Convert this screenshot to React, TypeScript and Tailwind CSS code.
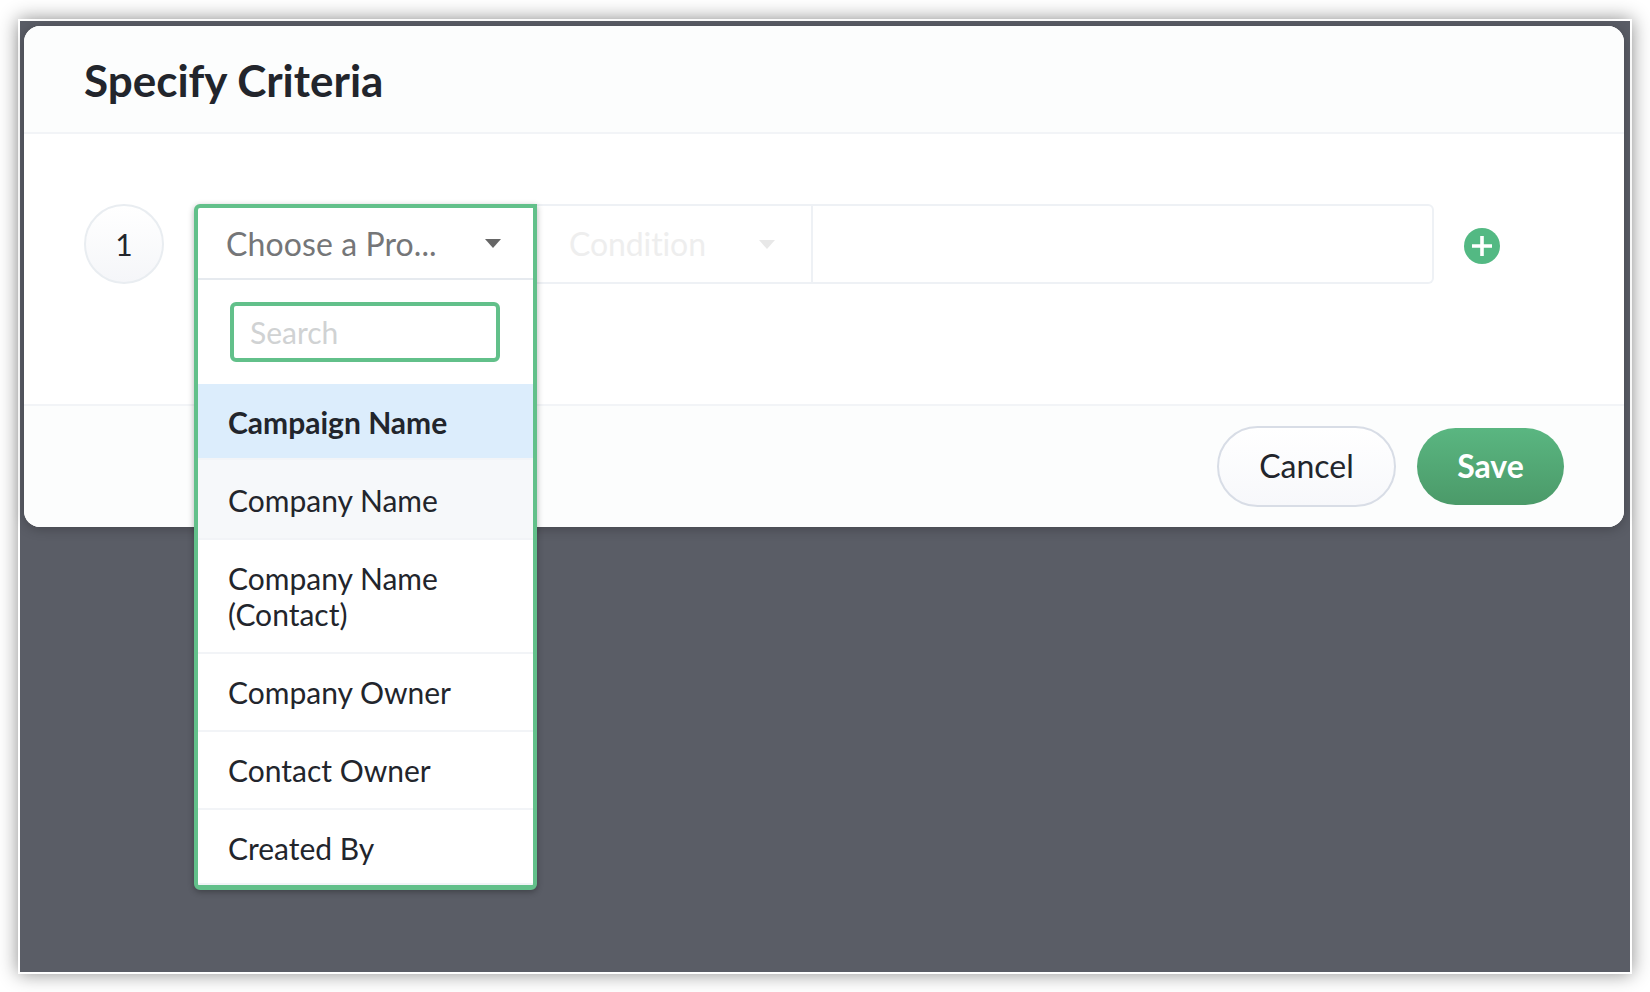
export default function App() {
  const Item = ({ children, cls = "" }: { children: React.ReactNode; cls?: string }) => (
    <div className={`flex items-center pl-[30px] pr-4 text-[30px] leading-[36px] border-b-2 border-[#f2f4f7] text-[#22252c] ${cls}`}>{children}</div>
  );
  return (
    <div className="w-[1650px] h-[992px] bg-white pt-[19px] pl-[18px] font-['Lato',sans-serif]">
      <div className="w-[1614px] h-[955px] border-2 border-white bg-[#5a5d66] shadow-[0_0_18px_rgba(0,0,0,0.45)] pt-[5px] pl-[4px]">
        <div className="w-[1600px] h-[501px] rounded-[16px] bg-white shadow-[0_2px_12px_rgba(0,0,0,0.25)] flex flex-col overflow-visible">
          <div className="h-[108px] shrink-0 rounded-t-[16px] bg-[#fcfdfd] border-b-2 border-[#f2f4f7] pl-[60px] pt-[26px]">
            <h1 className="text-[44px] leading-[56px] font-bold text-[#22252c]">Specify Criteria</h1>
          </div>
          <div className="h-[270px] shrink-0 pt-[70px] pl-[60px] flex items-start">
            <div className="w-[80px] h-[80px] rounded-full border-2 border-[#e9edf1] bg-gradient-to-b from-white to-[#f5f6f9] flex items-center justify-center text-[30px] text-[#22252c]">1</div>
            <div className="relative w-[343px] h-[80px] ml-[30px] shrink-0">
              <div className="absolute left-0 top-0 w-[343px] h-[686px] z-10 rounded-[6px] rounded-tr-none border-[4px] border-b-[5px] border-[#62c08a] bg-white shadow-[0_2px_6px_rgba(0,0,0,0.3)] flex flex-col overflow-hidden">
                <div className="h-[72px] shrink-0 border-b-2 border-[#e6eaef] flex items-center justify-between pl-[28px] pr-[32px] pt-[1px]">
                  <span className="text-[32px] tracking-[0.1px] text-[#757678]">Choose a Pro...</span>
                  <svg width="16" height="9" viewBox="0 0 16 9"><path d="M0 0h16L8 9z" fill="#666" /></svg>
                </div>
                <div className="h-[104px] shrink-0 pt-[22px] pl-[32px]">
                  <div className="w-[270px] h-[60px] rounded-[6px] border-[4px] border-[#62c08a] bg-white flex items-center pl-[16px] text-[30px] text-[#d0d2d3]">Search</div>
                </div>
                <Item cls="h-[76px] pt-[1px] bg-[#dcedfc] font-bold border-b-0">Campaign Name</Item>
                <Item cls="h-[80px] pt-[1px] bg-[#f6f8fa]">Company Name</Item>
                <Item cls="h-[114px]">Company Name<br />(Contact)</Item>
                <Item cls="h-[78px]">Company Owner</Item>
                <Item cls="h-[78px]">Contact Owner</Item>
                <Item cls="flex-1 pt-[2px] border-b-0">Created By</Item>
              </div>
            </div>
            <div className="w-[276px] h-[80px] shrink-0 border-y-2 border-r-2 border-[#eef1f5] flex items-center justify-between pl-[32px] pr-[36px]">
              <span className="text-[32px] tracking-[-0.1px] text-[#eeeeee]">Condition</span>
              <svg width="16" height="9" viewBox="0 0 16 9"><path d="M0 0h16L8 9z" fill="#e8e8e8" /></svg>
            </div>
            <div className="w-[621px] h-[80px] shrink-0 border-y-2 border-r-2 border-[#eef1f5] rounded-r-[6px]" />
            <div className="ml-[30px] mt-[24px] w-[36px] h-[36px] rounded-full bg-[#53b983] flex items-center justify-center">
              <svg width="20" height="20" viewBox="0 0 20 20"><path d="M10 0v20M0 10h20" stroke="#fff" strokeWidth="3.6" /></svg>
            </div>
          </div>
          <div className="flex-1 rounded-b-[16px] bg-[#fcfdfd] border-t-2 border-[#f2f4f7] flex items-start justify-end pr-[60px] pt-[20px] gap-[21px]">
            <button className="w-[179px] h-[81px] pb-[2px] rounded-full border-2 border-[#d8dde6] bg-gradient-to-b from-white to-[#f7f8fb] text-[32px] text-[#22252c]">Cancel</button>
            <button className="w-[147px] h-[77px] mt-[2px] pb-[2px] rounded-full bg-gradient-to-b from-[#5ab681] to-[#4b9a69] text-[32px] font-bold text-white">Save</button>
          </div>
        </div>
      </div>
    </div>
  );
}
